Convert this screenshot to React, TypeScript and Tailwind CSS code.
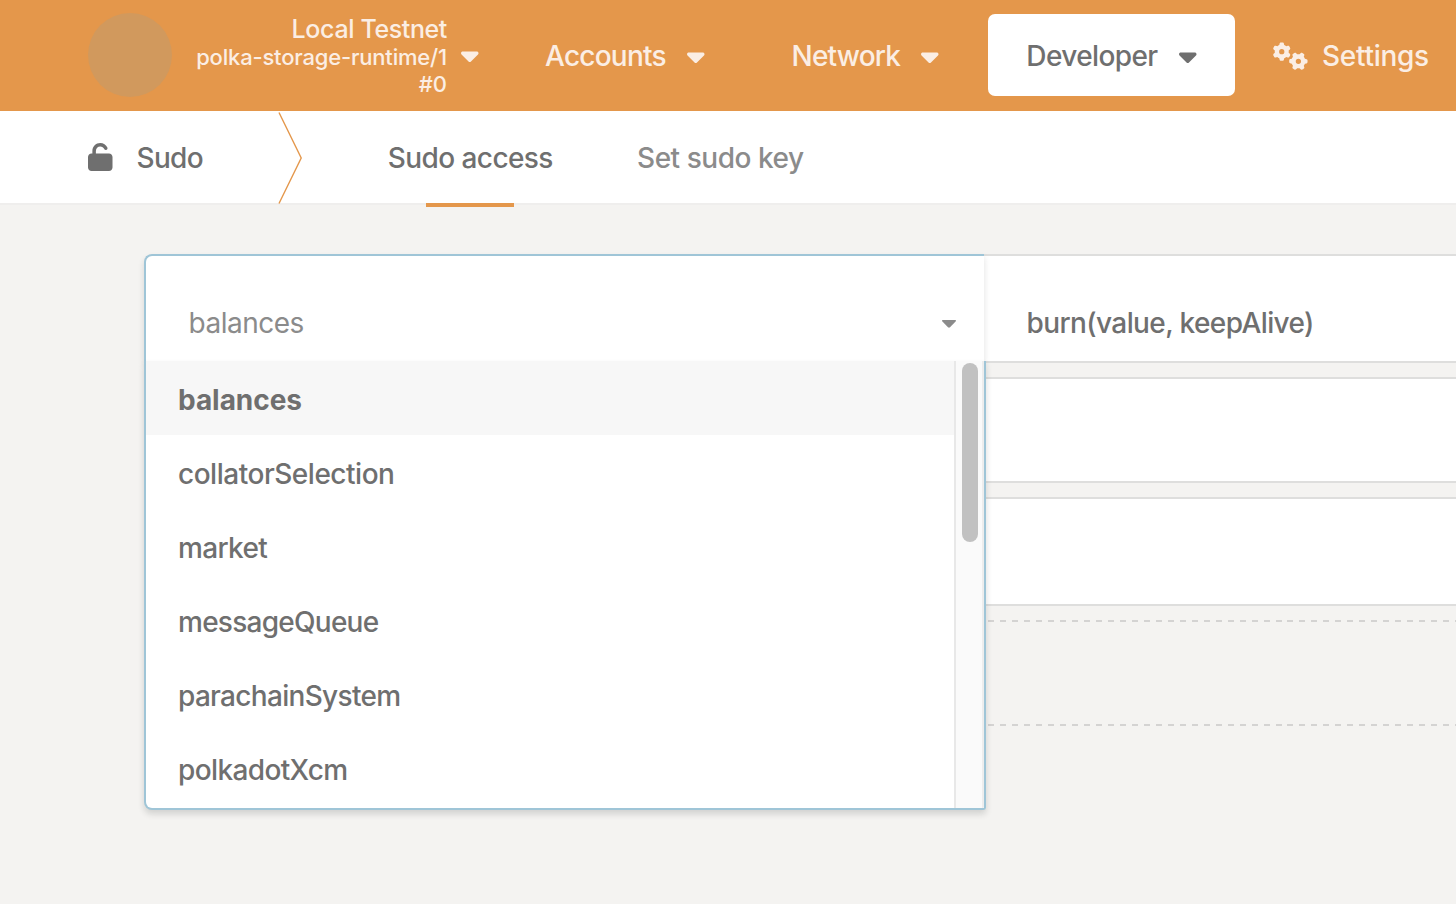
import React from 'react';
import { FaCaretDown, FaGears, FaUnlock } from 'react-icons/fa6';

const pallets = [
  { name: 'balances', look: 'tracking-[-0.04px]' },
  { name: 'collatorSelection', look: 'tracking-[-0.48px]' },
  { name: 'market', look: 'tracking-[-0.65px]' },
  { name: 'messageQueue', look: 'tracking-[-0.74px]' },
  { name: 'parachainSystem', look: 'tracking-[-0.69px]' },
  { name: 'polkadotXcm', look: 'tracking-[-0.62px]' },
];

function Header() {
  return (
    <header className="flex h-[111px] shrink-0 items-start bg-[#e4974b] text-[#fbeee4]">
      <div className="ml-[88px] mt-[13px] size-[84px] shrink-0 rounded-full bg-[#d1995d]" />
      <div className="mt-[15px] flex w-[275px] items-start justify-end">
        <div className="flex flex-col items-end whitespace-nowrap">
          <span className="text-[25px] leading-[29px] tracking-[-0.38px]">Local Testnet</span>
          <span className="text-[22px] leading-[27px] tracking-[-0.19px]">polka-storage-runtime/1</span>
          <span className="text-[22px] leading-[27px]">#0</span>
        </div>
      </div>
      <FaCaretDown className="ml-[14px] mt-[41px] h-7 w-[17.5px] shrink-0" />
      <nav className="flex items-start">
        <a className="ml-[66px] mt-[14px] flex h-[84px] w-[160px] items-center justify-between">
          <span className="w-[120px] whitespace-nowrap pl-[0.5px] tracking-[-0.75px]">Accounts</span>
          <FaCaretDown className="h-7 w-[17.5px] shrink-0" />
        </a>
        <a className="ml-[87px] mt-[14px] flex h-[84px] w-[147px] items-center justify-between">
          <span className="w-[108px] whitespace-nowrap tracking-[-0.8px]">Network</span>
          <FaCaretDown className="h-7 w-[17.5px] shrink-0" />
        </a>
        <a className="ml-[49px] mt-[14px] flex h-[82px] w-[247px] items-center justify-between rounded-[7px] bg-white pl-[38px] pr-[38px] text-[#6f6f6f]">
          <span className="mt-[2px] w-[130px] whitespace-nowrap pl-[0.8px] tracking-[-0.6px]">Developer</span>
          <FaCaretDown className="mt-[2px] h-7 w-[17.5px] shrink-0" />
        </a>
        <a className="ml-[38px] mt-[14px] flex h-[84px] items-center">
          <FaGears className="h-7 w-[35px] shrink-0" />
          <span className="ml-[14.5px] whitespace-nowrap tracking-[-0.28px]">Settings</span>
        </a>
      </nav>
    </header>
  );
}

function Tabs() {
  return (
    <div className="relative z-10 flex h-[92px] shrink-0 items-stretch bg-white text-[#6f6f6f]">
      <div className="flex w-[278px] items-center pl-[88px]">
        <FaUnlock className="h-7 w-[24.5px] shrink-0" />
        <span className="ml-6 mt-[2px] tracking-[-0.7px]">Sudo</span>
      </div>
      <svg className="h-[93px] w-6 shrink-0 overflow-visible" viewBox="0 0 24 93" fill="none">
        <path d="M1 1.5L23.2 47L1 92.5" stroke="#e4974b" strokeWidth="1.4" />
      </svg>
      <div className="ml-[86px] flex w-[164px] flex-col items-center">
        <span className="flex h-[92px] shrink-0 items-center whitespace-nowrap pl-[0.6px] pt-[2px] tracking-[-0.58px]">Sudo access</span>
        <span className="h-1 w-[88px] shrink-0 bg-[#e4974b]" />
      </div>
      <div className="ml-[85px] flex items-center whitespace-nowrap pt-[2px] tracking-[-0.46px] text-[#8b8b8b]">Set sudo key</div>
    </div>
  );
}

function PalletMenu() {
  return (
    <div className="absolute left-[-2px] top-[105px] flex h-[449px] w-[842px] overflow-hidden rounded-bl-[8px] rounded-br-[3px] border-2 border-t-0 border-[#9fc5d7] bg-white text-[#6f6f6f] shadow-[0_4px_6px_rgba(34,36,38,0.16)]">
      <ul className="w-[808px] shrink-0">
        {pallets.map((p, i) => (
          <li
            key={p.name}
            className={`flex h-[74px] items-center pl-8 pt-[4px] ${p.look} ${i === 0 ? 'bg-[#f7f7f7] font-bold' : ''}`}
          >
            {p.name}
          </li>
        ))}
      </ul>
      <div className="w-[30px] shrink-0 border-x-2 border-l-[#e8e8e8] border-r-[#ededed] bg-[#fafafa] pl-[6px] pt-[2px]">
        <div className="h-[179px] w-4 rounded-full bg-[#c1c1c1]" />
      </div>
    </div>
  );
}

export default function App() {
  return (
    <div className="flex h-[904px] w-[1456px] flex-col overflow-hidden bg-[#f4f3f1] font-['Inter',sans-serif] text-[28px] font-medium leading-[34px]">
      <Header />
      <Tabs />
      <main className="flex flex-1 flex-col border-t-2 border-[#efeeed] pl-[144px] pt-[49px]">
        <section className="flex h-[109px] shrink-0">
          <div className="relative z-10 h-[107px] w-[840px] shrink-0 rounded-tl-[8px] border-l-2 border-t-2 border-[#9fc5d7] bg-white shadow-[0_4px_6px_rgba(34,36,38,0.14)]">
            <div className="flex h-[105px] items-center justify-between pl-[42.5px] pr-7 pt-[29px] text-[#8b8b8b]">
              <span className="font-normal tracking-[-0.5px]">balances</span>
              <svg className="mt-[2px] h-2 w-[14px]" viewBox="0 0 14 8" fill="currentColor">
                <path d="M0.8 0H13.2Q14.6 0.4 13.6 1.6L8 7.3Q7 8.2 6 7.3L0.4 1.6Q-0.6 0.4 0.8 0Z" />
              </svg>
            </div>
            <PalletMenu />
          </div>
          <div className="flex-1 whitespace-nowrap border-y-2 border-[#dededd] bg-white pl-[42.6px] pt-[50px] tracking-[-0.61px] text-[#6f6f6f]">
            burn(value, keepAlive)
          </div>
        </section>
        <div className="mt-[14px] h-[106px] shrink-0 border-y-2 border-[#dededd] bg-white" />
        <div className="mt-[14px] h-[109px] shrink-0 border-y-2 border-[#dededd] bg-white" />
        <div className="ml-[844px] mt-[14px] flex h-[106px] shrink-0 flex-col justify-between">
          <div className="h-[2px] bg-[repeating-linear-gradient(90deg,#d4d3d2_0_6px,transparent_6px_11.98px)]" />
          <div className="h-[2px] bg-[repeating-linear-gradient(90deg,#d4d3d2_0_6px,transparent_6px_11.98px)]" />
        </div>
      </main>
    </div>
  );
}
